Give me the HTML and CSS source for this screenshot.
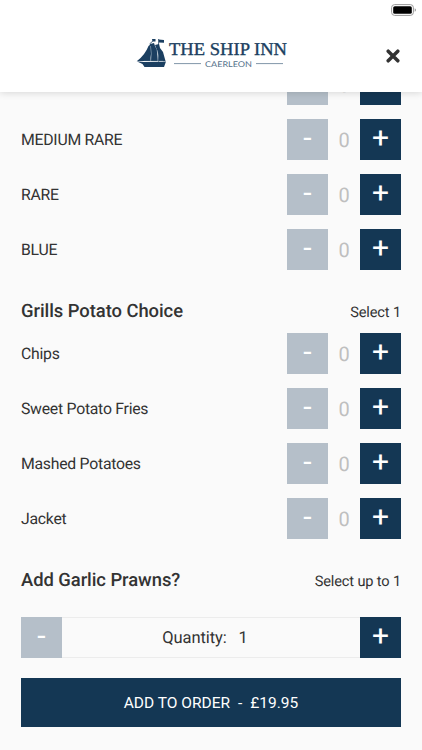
FILE: index.html
```html
<!DOCTYPE html>
<html lang="en">
<head>
<meta charset="utf-8">
<title>The Ship Inn</title>
<link rel="stylesheet" href="styles.css">
</head>
<body>
<header class="header">
  <svg class="battery" viewBox="0 0 26 12"><rect x=".6" y=".6" width="21.8" height="10.8" rx="3" fill="#fff" stroke="#999" stroke-width="1"/><rect x="2.2" y="2.2" width="18.6" height="7.6" rx="1.6" fill="#000"/><path d="M23.7 4.2v3.6q1.3-.6 1.3-1.8t-1.3-1.8" fill="#999"/></svg>
  <svg class="logo" viewBox="0 0 165 50">
    <g fill="#1b3f61">
      <path d="M7 31Q15 25 18.5 16L21 14Q22 21 20 31Z"/>
      <path d="M20 14L24 13L25 16L27 20L28 31H20Q22 23 20 14"/>
      <path d="M22 9h3.5v2.5h-3zM28.6 9.5L34 10v2.8l-5-.3z"/>
      <path d="M25 15l4-1 1 4 3 4 2.5 9h-7.5q1-6-1-11z"/>
      <path d="M6.5 31.3l7.5.6 22-.5-2 5.6H14.5l-2-3z"/>
      <path d="M19.5 14L24 10M28.6 9v23" fill="none" stroke="#1b3f61" stroke-width=".8"/>
    </g>
    <path d="M20.4 16q2 8 .2 15M27 20q2 6 .8 11M14 31.3h19" fill="none" stroke="#dce5ec" stroke-width=".4"/>
    <text class="logo-name" x="39" y="25" textLength="118" lengthAdjust="spacingAndGlyphs">THE SHIP INN</text>
    <text class="logo-place" x="75" y="37.2" textLength="47" lengthAdjust="spacingAndGlyphs">CAERLEON</text>
    <path d="M44 33.6h27M126 33.6h27" stroke="#617b92" stroke-width=".8"/>
  </svg>
  <svg class="close" viewBox="0 0 14 14"><path d="M2.2 2.2l9.6 9.6M11.8 2.2L2.2 11.8" stroke="#333" stroke-width="3.5" stroke-linecap="round"/></svg>
</header>
<main class="options">
  <div class="row"><span></span><button class="step off">-</button><span class="count">0</span><button class="step">+</button></div>
  <div class="row"><span>MEDIUM RARE</span><button class="step off">-</button><span class="count">0</span><button class="step">+</button></div>
  <div class="row"><span>RARE</span><button class="step off">-</button><span class="count">0</span><button class="step">+</button></div>
  <div class="row"><span>BLUE</span><button class="step off">-</button><span class="count">0</span><button class="step">+</button></div>
  <div class="group"><h2>Grills Potato Choice</h2><span>Select 1</span></div>
  <div class="row"><span>Chips</span><button class="step off">-</button><span class="count">0</span><button class="step">+</button></div>
  <div class="row"><span>Sweet Potato Fries</span><button class="step off">-</button><span class="count">0</span><button class="step">+</button></div>
  <div class="row"><span>Mashed Potatoes</span><button class="step off">-</button><span class="count">0</span><button class="step">+</button></div>
  <div class="row"><span>Jacket</span><button class="step off">-</button><span class="count">0</span><button class="step">+</button></div>
  <div class="group"><h2>Add Garlic Prawns?</h2><span>Select up to 1</span></div>
</main>
<footer class="footer">
  <div class="quantity"><button class="step off">-</button><div class="amount"><span>Quantity:</span><span>1</span></div><button class="step">+</button></div>
  <button class="order"><span>ADD TO ORDER</span><span>-</span><span>£19.95</span></button>
</footer>
</body>
</html>
```
FILE: styles.css
```css
* { box-sizing: border-box; }
body {
  margin: 0;
  height: 750px;
  overflow: hidden;
  display: flex;
  flex-direction: column;
  background: #fafafa;
  color: #333;
  font: 15.8px/20px Roboto, sans-serif;
  letter-spacing: -.26px;
  text-rendering: geometricPrecision;
}
.header {
  position: relative;
  z-index: 1;
  flex: none;
  height: 92px;
  padding-top: 30px;
  display: flex;
  justify-content: center;
  background: #fff;
  box-shadow: 0 1px 7px rgba(0, 0, 0, .14);
}
.logo { width: 165px; height: 50px; margin-left: 2px; letter-spacing: 0; }
.logo-name { font: 18px/1 "Liberation Serif", serif; fill: #1b3f61; stroke: #1b3f61; stroke-width: .35px; }
.logo-place { font: 8px/1 Lato, sans-serif; fill: #54708a; }
.battery { position: absolute; top: 4px; right: 5px; width: 26px; height: 12px; }
.close { position: absolute; top: 49px; right: 22px; width: 14px; height: 14px; }
.options {
  flex: none;
  height: 553px;
  margin-top: -28px;
  padding: 0 21px;
}
.row {
  display: grid;
  grid-template-columns: 1fr 41px 32px 41px;
  align-items: center;
  height: 41px;
  margin-bottom: 14px;
}
.step {
  display: block;
  width: 41px;
  height: 41px;
  padding: 0 0 3px;
  border: 0;
  background: #143754;
  color: #fff;
  font: 400 30px/38px Roboto, sans-serif;
  text-align: center;
}
.step.off { background: #b5bfc9; }
.count { color: #bfbfbf; font-size: 20px; text-align: center; padding-top: 1px; }
.group {
  display: flex;
  justify-content: space-between;
  align-items: center;
  height: 20px;
  margin: 32px 0 11px;
  font-size: 14.6px;
  letter-spacing: -.15px;
}
.group h2 { margin: 0; font-size: 18.4px; font-weight: 500; letter-spacing: -.05px; }
.footer { padding: 0 21px; }
.quantity { display: flex; height: 41px; margin-bottom: 20px; }
.amount {
  flex: 1;
  display: flex;
  justify-content: center;
  align-items: center;
  gap: 12px;
  padding: 2px 12px 0 0;
  border: solid #ececec;
  border-width: 1px 0;
  font-size: 16.5px;
  letter-spacing: -.1px;
}
.order {
  display: flex;
  justify-content: center;
  align-items: center;
  gap: 8px;
  width: 100%;
  height: 49px;
  padding: 0;
  border: 0;
  background: #143754;
  color: #fff;
  font: 15.5px/20px Roboto, sans-serif;
}
```
